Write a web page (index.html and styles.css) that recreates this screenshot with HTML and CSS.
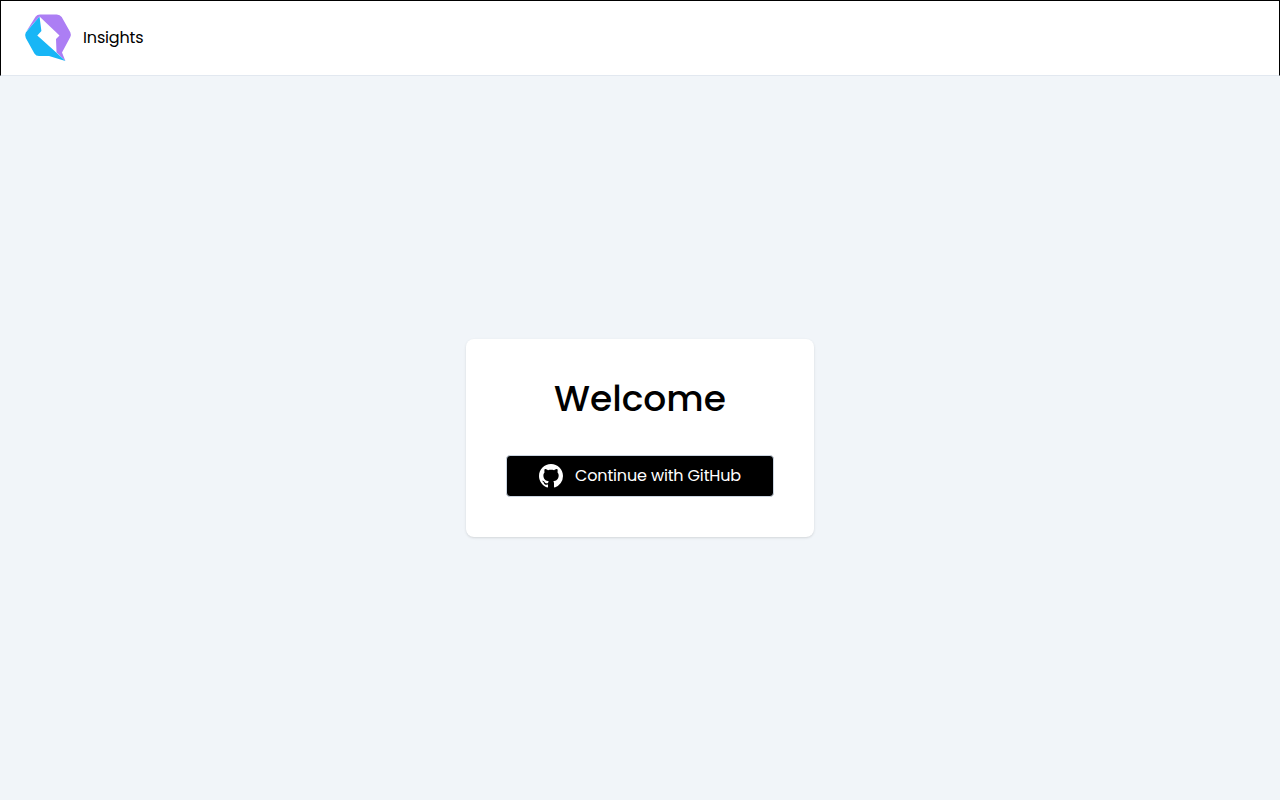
FILE: index.html
```
<!DOCTYPE html>
<html lang="en">
<head>
<meta charset="utf-8">
<title>Insights</title>
<link rel="stylesheet" href="styles.css">
</head>

<body>
<header class="header">
	<a href="#" class="brand">
		<svg class="logo" width="46" height="47" viewBox="0 0 46 47">
			<path fill="#ac7ef4" d="M1 18 10.5 2.8Q12.2.4 15 .4H31.8Q35 .4 36.7 3L45.3 18.2Q46.4 20.7 45.3 23L37 38.4 40.4 47 31.5 38.2 31 25 34.5 21.5 14.5 2.4Z"/>
			<path fill="#18b6f6" d="M14.5 2.4 16.4 17 12.3 21.5 31.8 39 40.4 47 24 42H14Q11 42 9.4 39.4L.8 24Q-.6 21 .8 18.5Z"/>
		</svg>
		<span class="brand_name">Insights</span>
	</a>
</header>
<main class="main">
	<div class="card">
		<h1>Welcome</h1>
		<button type="button" class="github">
			<svg width="24" height="24" viewBox="0 0 16 16" fill="#fff">
				<path d="M8 0C3.58 0 0 3.58 0 8c0 3.54 2.29 6.53 5.47 7.59.4.07.55-.17.55-.38 0-.19-.01-.82-.01-1.49-2.01.37-2.53-.49-2.69-.94-.09-.23-.48-.94-.82-1.13-.28-.15-.68-.52-.01-.53.63-.01 1.08.58 1.23.82.72 1.21 1.87.87 2.33.66.07-.52.28-.87.51-1.07-1.78-.2-3.64-.89-3.64-3.95 0-.87.31-1.59.82-2.15-.08-.2-.36-1.02.08-2.12 0 0 .67-.21 2.2.82.64-.18 1.32-.27 2-.27s1.36.09 2 .27c1.53-1.04 2.2-.82 2.2-.82.44 1.1.16 1.92.08 2.12.51.56.82 1.27.82 2.15 0 3.07-1.87 3.75-3.65 3.95.29.25.54.73.54 1.48 0 1.07-.01 1.93-.01 2.2 0 .21.15.46.55.38A8.01 8.01 0 0 0 16 8c0-4.42-3.58-8-8-8z"/>
			</svg>
			<span>Continue with GitHub</span>
		</button>
	</div>
</main>
</body>
</html>
```
FILE: styles.css
```
*{ margin:0; padding:0; box-sizing:border-box}
body{ min-height:100vh; display:flex; flex-direction:column; background:#f1f5f9; color:#000; font:16px/24px Poppins,Inter,"Liberation Sans",sans-serif; letter-spacing:-.15px;}
a{ color:inherit; text-decoration:none;}

.header{ height:76px; padding:0 24px; display:flex; align-items:center; background:#fff; border:1px solid #000; border-bottom-color:#e2e8f0;}
.brand{ display:flex; align-items:center; gap:12px;}
.logo{ display:block; margin-bottom:2px; overflow:visible;}

.main{ flex:1; display:flex; align-items:center; justify-content:center;}
.card{ width:348px; height:198px; padding:40px; background:#fff; border-radius:8px; box-shadow:0 1px 3px rgba(0,0,0,.1),0 1px 2px -1px rgba(0,0,0,.1);}
.card h1{ margin-bottom:36px; font-size:36px; line-height:40px; font-weight:500; letter-spacing:0; text-align:center;}

.github{ width:268px; height:42px; display:flex; align-items:center; justify-content:center; gap:12px; background:#000; color:#fff; border:1px solid #cbd5e1; border-radius:4px; font:inherit; letter-spacing:inherit; white-space:nowrap;}
```
